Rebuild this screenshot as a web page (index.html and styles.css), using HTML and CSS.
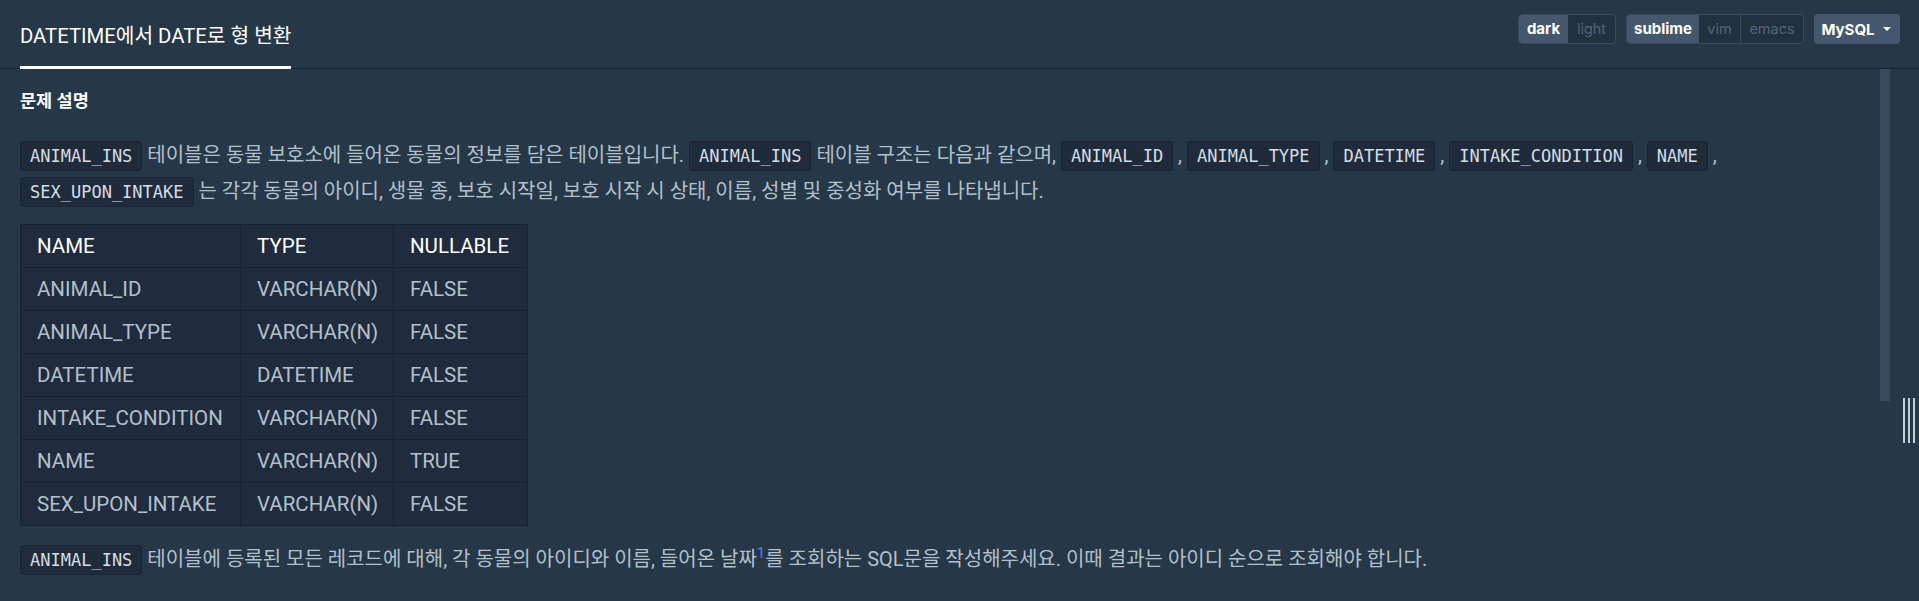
FILE: index.html
```html
<!DOCTYPE html>
<html lang="ko">
<head>
<meta charset="utf-8">
<title>DATETIME에서 DATE로 형 변환</title>
<link rel="stylesheet" href="styles.css">
</head>
<body>
<div class="app">
  <header class="topbar">
    <nav class="tabs">
      <div class="tab">DATETIME에서 DATE로 형 변환</div>
    </nav>
    <div class="controls">
      <div class="seg">
        <span class="opt on w-dark">dark</span><span class="opt w-light">light</span>
      </div>
      <div class="seg">
        <span class="opt on w-sublime">sublime</span><span class="opt w-vim">vim</span><span class="opt w-emacs">emacs</span>
      </div>
      <button class="lang">MySQL <span class="caret"></span></button>
    </div>
  </header>
  <div class="main">
    <section class="desc">
      <h6 class="heading">문제 설명</h6>
      <p class="para"><code>ANIMAL_INS</code> 테이블은 동물 보호소에 들어온 동물의 정보를 담은 테이블입니다. <code>ANIMAL_INS</code> 테이블 구조는 다음과 같으며, <code>ANIMAL_ID</code> , <code>ANIMAL_TYPE</code> , <code>DATETIME</code> , <code>INTAKE_CONDITION</code> , <code>NAME</code> , <code>SEX_UPON_INTAKE</code> 는 각각 동물의 아이디, 생물 종, 보호 시작일, 보호 시작 시 상태, 이름, 성별 및 중성화 여부를 나타냅니다.</p>
      <table class="schema">
        <colgroup><col class="c1"><col class="c2"><col class="c3"></colgroup>
        <thead>
          <tr><th>NAME</th><th>TYPE</th><th>NULLABLE</th></tr>
        </thead>
        <tbody>
          <tr><td>ANIMAL_ID</td><td>VARCHAR(N)</td><td>FALSE</td></tr>
          <tr><td>ANIMAL_TYPE</td><td>VARCHAR(N)</td><td>FALSE</td></tr>
          <tr><td>DATETIME</td><td>DATETIME</td><td>FALSE</td></tr>
          <tr><td>INTAKE_CONDITION</td><td>VARCHAR(N)</td><td>FALSE</td></tr>
          <tr><td>NAME</td><td>VARCHAR(N)</td><td>TRUE</td></tr>
          <tr><td>SEX_UPON_INTAKE</td><td>VARCHAR(N)</td><td>FALSE</td></tr>
        </tbody>
      </table>
      <p class="para last"><code>ANIMAL_INS</code> 테이블에 등록된 모든 레코드에 대해, 각 동물의 아이디와 이름, 들어온 날짜<sup class="fn"><a href="#fn1">1</a></sup>를 조회하는 SQL문을 작성해주세요. 이때 결과는 아이디 순으로 조회해야 합니다.</p>
    </section>
    <div class="track"><div class="thumb"></div></div>
    <div class="gutter">
      <div class="handle"><span></span><span></span><span></span></div>
    </div>
  </div>
</div>
</body>
</html>
```

FILE: styles.css
```css
* { box-sizing: border-box; }
html, body { margin: 0; height: 100%; }
body {
  background: #263747;
  color: #b2c0cc;
  font-family: Roboto, "Noto Sans CJK KR", sans-serif;
  overflow: hidden;
}
.app { display: flex; flex-direction: column; height: 601px; }

.topbar {
  display: flex;
  justify-content: space-between;
  align-items: flex-start;
  height: 69px;
  border-bottom: 1px solid #172334;
  padding: 0 19px 0 20px;
}
.tabs { display: flex; }
.tab {
  display: flex;
  align-items: center;
  height: 69px;
  padding-top: 2px;
  border-bottom: 3px solid #ffffff;
  color: #ffffff;
  font-size: 20.3px;
  white-space: nowrap;
}
.controls { display: flex; gap: 10px; margin-top: 14px; }
.seg {
  display: flex;
  height: 30px;
  border: 1px solid #3a4b5d;
  border-radius: 4px;
  overflow: hidden;
  background: #223140;
}
.opt {
  text-align: center;
  line-height: 28px;
  font-family: Inter, sans-serif;
  font-size: 14.5px;
  color: #4f6577;
  white-space: nowrap;
}
.opt + .opt { border-left: 1px solid #3a4b5d; }
.opt.on { background: #44576c; color: #ffffff; font-weight: 700; font-size: 15px; border-left: none; }
.opt.on + .opt { border-left: none; }
.w-dark { width: 49px; }
.w-light { width: 47px; }
.w-sublime { width: 72px; }
.w-vim { width: 41px; }
.w-emacs { width: 63px; }
.lang {
  display: flex;
  align-items: center;
  justify-content: center;
  gap: 8px;
  width: 86px;
  height: 30px;
  border: 0;
  border-radius: 4px;
  background: #44576c;
  color: #ffffff;
  font-family: Inter, sans-serif;
  font-size: 15px;
  font-weight: 700;
  padding: 0 2px 0 0;
}
.caret {
  width: 0; height: 0;
  border-left: 4px solid transparent;
  border-right: 4px solid transparent;
  border-top: 4px solid #ffffff;
}

.main { display: flex; flex: 1; min-height: 0; }
.desc { flex: 1; padding: 20px 20px 0 20px; overflow: hidden; }
.heading {
  margin: 0;
  font-size: 17.5px;
  line-height: 24px;
  font-weight: 700;
  color: #ffffff;
}
.para {
  margin: 24.5px 0 0;
  font-size: 20px;
  line-height: 35px;
}
.para.last { margin-top: 16.5px; }
code {
  font-family: "DejaVu Sans Mono", monospace;
  font-size: 17px;
  color: #d5dde6;
  background: #1f2b3b;
  border: 1px solid #172334;
  border-radius: 4px;
  padding: 4px 9px;
}
.fn { font-size: 15px; line-height: 0; }
.fn a { color: #3d86f5; text-decoration: none; }

.schema {
  margin-top: 14px;
  border-collapse: collapse;
  table-layout: fixed;
  width: 507px;
  background: #202b3d;
  font-size: 20.5px;
}
.c1 { width: 220px; }
.c2 { width: 153px; }
.c3 { width: 134px; }
.schema th, .schema td {
  border: 1px solid #172334;
  height: 43px;
  padding: 0 16px;
  text-align: left;
  font-weight: 400;
  white-space: nowrap;
}
.schema th { color: #ffffff; }
.schema td { color: #b2c0cc; }

.track { width: 10px; }
.thumb { height: 332px; background: #3a4a5e; }
.gutter { width: 29px; padding: 329px 0 0 13px; }
.handle { display: flex; gap: 3px; height: 45px; }
.handle span { width: 2px; height: 45px; background: #c3ced6; }
```
